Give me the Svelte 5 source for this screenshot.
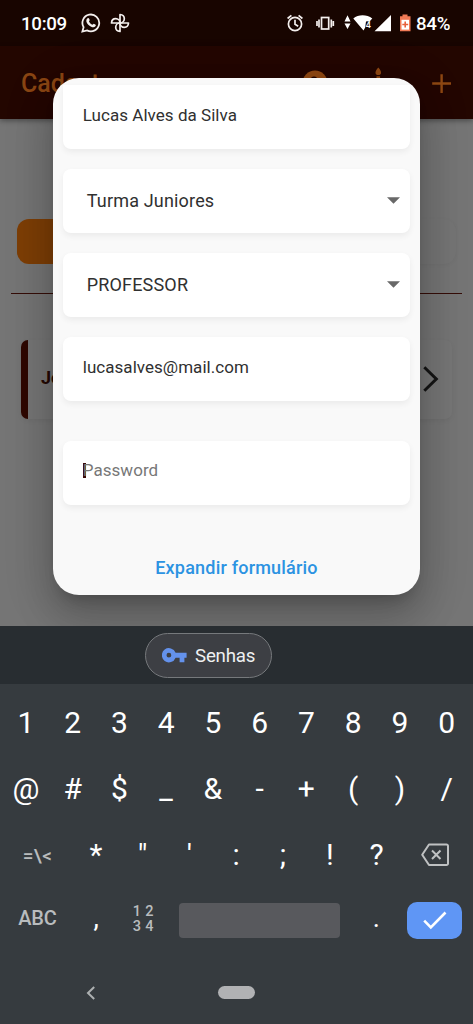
<script>
  const fields = [
    { text: 'Lucas Alves da Silva', kind: 'name' },
    { text: 'Turma Juniores', kind: 'select' },
    { text: 'PROFESSOR', kind: 'select' },
    { text: 'lucasalves@mail.com', kind: 'mail' },
    { text: 'Password', kind: 'password' }
  ];
  const digits = [...'1234567890'];
  const symbols = [...'@#$_&-+()/'];
  const marks = [...'*"\':;!?'];
</script>

<div class="phone">
  <main class="screen">
    <div class="status">
      <span class="time">10:09</span>
      <svg class="wa" width="20" height="20" viewBox="0 0 20 20" fill="none" stroke="#f4efed">
        <path stroke-width="1.8" d="M1.4 18.6l1.2-4.4A8.4 8.4 0 1 1 6 17.4z" />
        <path fill="#f4efed" stroke="none" d="M6.600 5.200c.6-.4 1.200-.3 1.400.3l.7 1.600c.1.5-.6 1-.7 1.300.7 1.500 1.900 2.700 3.500 3.300.4-.1.9-1 1.300-.9l1.800.9c.4.3.2 1-.2 1.600-1 1.200-2.600 1.200-4.300.4-2.200-1-3.800-2.700-4.600-4.700-.4-1.500-.1-3.100 1.100-3.800z" />
      </svg>
      <svg class="fan" width="20" height="20" viewBox="0 0 20 20" fill="none" stroke="#f4efed" stroke-width="1.7" stroke-linejoin="round">
        <path d="M10 10V1.500c3 .2 4.300 2 4.300 4.200 0 2.400-1.900 4.300-4.300 4.300z" />
        <path d="M10 10h8.500c-.2 3-2 4.300-4.200 4.300-2.400 0-4.300-1.900-4.300-4.300z" />
        <path d="M10 10v8.500c-3-.2-4.300-2-4.300-4.200 0-2.400 1.900-4.300 4.300-4.300z" />
        <path d="M10 10H1.500c.2-3 2-4.300 4.200-4.300 2.400 0 4.300 1.900 4.300 4.300z" />
      </svg>
      <span class="spacer"></span>
      <svg width="164" height="24" viewBox="286 11 164 24" class="sys">
        <g fill="none" stroke="#f4efed" stroke-width="1.700">
          <circle cx="295" cy="24" r="6.600" />
          <path d="M295 19.800v4.500l3.200 2M287.600 18.500l3.800-3.200M302.400 18.500l-3.800-3.200" />
          <rect x="321.500" y="17.500" width="7.200" height="11.500" />
          <path d="M319 19.500v8M317 21v5M331.300 19.500v8M333.300 21v5" />
        </g>
        <path fill="#fff" d="M344.500 21.500l3-6.200 3 6.200zM344.500 23.500h6l-3 5.500zM353.300 18.500c5-4.200 13.500-4.200 19 0l-2.300 2.500-4 .6-.8 6-1.700 3zM374.500 31.200H391V15z" />
        <text x="365.800" y="28.300" font-size="9" font-weight="500" fill="#fff">4</text>
        <path fill="#f17a55" d="M402.500 14.500h5v1.700h3v15h-10.500v-15h2.500z" />
        <path fill="#fff" d="M401.500 19.800h7.500v9.800h-7.500z" />
        <path stroke="#e8603a" stroke-width="1.600" d="M405.200 21.500v6M402.300 24.500h5.900" />
        <text x="416" y="30.200" font-size="18.700" font-weight="500" fill="#fff" textLength="34.500">84%</text>
      </svg>
    </div>
    <header>
      <h1>Cadastro</h1>
      <svg width="160" height="40" viewBox="300 62 160 40">
        <circle cx="315" cy="82" r="12.500" fill="#914914" />
        <circle cx="314" cy="79" r="3.500" fill="#230600" />
        <path fill="#914914" d="M378.300 66.500c4 4.500 3.400 7.400 0 7.600-3.400-.2-4-3.100 0-7.600zM376.500 75.300h3.600V92h-3.600z" />
        <path stroke="#8f4813" stroke-width="2.400" d="M432.200 82.500h18.800M441.600 73.200v18.800" />
      </svg>
    </header>
    <div class="tabs"><span class="active"></span><span class="idle"></span></div>
    <hr />
    <div class="person">
      <b>João</b>
      <svg width="18" height="28" viewBox="0 0 18 28" fill="none" stroke="#151515" stroke-width="3"><path d="M1.300 2.300L13.300 14l-12 11.700" /></svg>
    </div>

    <div class="overlay">
      <section class="dialog">
        <div class="form">
          {#each fields as f}
            <div class="field {f.kind}">
              <span>{f.text}</span>
              {#if f.kind === 'select'}
                <svg width="13" height="7" viewBox="0 0 13 7"><path fill="#686868" d="M0 .3h13L6.500 6.800z" /></svg>
              {/if}
            </div>
          {/each}
        </div>
        <button class="expand">Expandir formulário</button>
      </section>
    </div>
  </main>

  <section class="keyboard">
    <div class="suggest">
      <div class="chip">
        <svg width="25" height="15" viewBox="0 0 25 15"><path fill="#6492ec" fill-rule="evenodd" d="M13.600 4.800H24.600v4.900h-2.200v4.600h-4.800V9.700h-4A7.100 7.100 0 1 1 13.600 4.800zM6.900 4.800a2.400 2.400 0 1 0 0 4.800 2.400 2.400 0 0 0 0-4.800z" /></svg>
        <span>Senhas</span>
      </div>
    </div>
    <div class="keys">
      <div class="row">{#each digits as k}<span class="key">{k}</span>{/each}</div>
      <div class="row">{#each symbols as k}<span class="key">{k}</span>{/each}</div>
      <div class="row">
        <span class="key wide alt">=\&lt;</span>
        {#each marks as k}<span class="key">{k}</span>{/each}
        <span class="key wide">
          <svg width="30" height="24" viewBox="0 0 30 24" fill="none" stroke="#bfc1c2" stroke-width="2"><path stroke-linejoin="round" d="M9 1.500h17.500a1.500 1.500 0 0 1 1.500 1.500v17.500a1.500 1.500 0 0 1-1.500 1.500H9l-6.800-10.200z" /><path d="M12 7.500l8.500 8.500M20.500 7.500L12 16" /></svg>
        </span>
      </div>
      <div class="row">
        <span class="key wide abc">ABC</span>
        <span class="key low">,</span>
        <span class="key numpad"><i>1 2</i><i>3 4</i></span>
        <span class="space"></span>
        <span class="key low">.</span>
        <span class="enter"><svg width="24" height="19" viewBox="0 0 24 19" fill="none" stroke="#fff" stroke-width="2.600"><path d="M1.200 9.700l6.600 6.600L22.500 1.500" /></svg></span>
      </div>
    </div>
    <nav>
      <svg width="10" height="14" viewBox="0 0 10 14" fill="none" stroke="#adb0b1" stroke-width="2"><path d="M8.200 1L2 7l6.200 6" /></svg>
      <span class="home"></span>
    </nav>
  </section>
</div>

<style>
  :global(body) { margin: 0; background: #363b3f; }
  .phone { width: 473px; height: 1024px; overflow: hidden; font-family: Roboto, sans-serif; display: flex; flex-direction: column; }
  .screen { position: relative; height: 626px; flex: none; background: #757575; overflow: hidden; }
  .status { height: 46px; box-sizing: border-box; background: #180500; display: flex; align-items: center; padding: 0 23px 0 21px; color: #fff; }
  .time { font-size: 18.700px; font-weight: 500; letter-spacing: -.3px; line-height: 46px; width: 60px; padding-top: 1px; box-sizing: border-box; height: 46px; }
  .fan { margin-left: 9px; }
  .spacer { flex: 1; }
  header { height: 73px; background: #230600; display: flex; align-items: center; justify-content: space-between; padding: 0 13px 0 21px; box-shadow: 0 2px 5px rgba(0, 0, 0, .35); }
  h1 { margin: 0; font-size: 25px; font-weight: 500; color: #8a4513; line-height: 40px; padding-top: 3px; }
  .tabs { display: flex; justify-content: space-between; margin: 100px 17px 0; height: 45px; }
  .tabs span { width: 210px; border-radius: 12px; }
  .active { background: #7d3e06; }
  .idle { background: #757575; box-shadow: 0 1px 4px rgba(0, 0, 0, .04); }
  hr { border: 0; height: 1.500px; margin: 28.500px 11px 0 11px; background: #350d08; }
  .person { margin: 46px 21px 0; height: 79px; box-sizing: border-box; border-left: 7px solid #2e0800; border-radius: 7px; background: #767676; box-shadow: 0 2px 5px rgba(0, 0, 0, .05); display: flex; align-items: center; justify-content: space-between; padding: 0 11px 4px 13px; }
  .person b { font-size: 18px; color: #250a05; }
  .person svg { margin-top: 3px; }
  .overlay { position: absolute; inset: 0; display: flex; justify-content: center; align-items: flex-start; padding-top: 77.500px; }
  .dialog { width: 367.500px; height: 517px; box-sizing: border-box; padding: 7px 10px 0; border-radius: 26px; background: #f9f9f9; box-shadow: 0 11px 15px -7px rgba(0, 0, 0, .2), 0 24px 38px 3px rgba(0, 0, 0, .14), 0 9px 46px 8px rgba(0, 0, 0, .12); display: flex; flex-direction: column; }
  .form { display: flex; flex-direction: column; gap: 20px; }
  .field { height: 64px; box-sizing: border-box; background: #fff; border-radius: 8px; box-shadow: 0 3px 6px rgba(0, 0, 0, .06); display: flex; align-items: center; justify-content: space-between; padding: 0 10px 0 20px; color: #303030; font-size: 17px; letter-spacing: .04px; }
  .name { border-radius: 0 0 8px 8px; padding-bottom: 4px; }
  .select { padding-left: 24px; font-size: 18px; letter-spacing: .17px; }
  .mail { padding-bottom: 4px; }
  .password { margin-top: 20px; color: #777; padding-bottom: 5px; }
  .password span { background: linear-gradient(#3a0a08, #3a0a08) 0 0 / 3px 100% no-repeat; line-height: 15px; }
  .expand { border: 0; background: none; padding: 0; margin-top: 51px; color: #2c93e2; font: 500 18px/24px Roboto, sans-serif; letter-spacing: .2px; }
  .keyboard { flex: 1; background: #363b3f; }
  .suggest { height: 58px; background: #282d31; display: flex; align-items: center; justify-content: center; box-sizing: border-box; padding: 0 56px 0 0; }
  .chip { width: 127px; height: 45px; box-sizing: border-box; border: 1px solid #76797c; border-radius: 23px; background: #3d3f44; display: flex; align-items: center; gap: 8px; padding-left: 16px; color: #eef0f1; font-size: 18.700px; letter-spacing: -.2px; }
  .chip span { padding-top: 2px; }
  .keys { padding: 6px 3px 0 2.500px; }
  .row { height: 66px; display: flex; align-items: center; }
  .key { flex: 1 1 0; height: 66px; line-height: 65px; text-align: center; color: #fff; font-size: 30px; }
  .wide { flex: 0 0 70px; display: flex; align-items: center; justify-content: center; }
  .alt { color: #b9bbbc; font-size: 19px; font-weight: 500; letter-spacing: .4px; }
  .abc { color: #b9bcbe; font-size: 20px; font-weight: 500; line-height: 60px; padding-bottom: 6px; box-sizing: border-box; letter-spacing: -.2px; }
  .low { line-height: 60px; font-size: 27px; }
  .row .numpad { flex: 0 0 47px; display: flex; flex-direction: column; justify-content: center; color: #b9bcbe; font-size: 14.500px; font-weight: 500; line-height: 15px; padding-bottom: 5px; box-sizing: border-box; letter-spacing: .3px; }
  .numpad i { font-style: normal; }
  .space { width: 161px; height: 35px; background: #58595d; border-radius: 4px; margin: 0 13px 2px 12px; }
  .enter { width: 55px; height: 37px; border-radius: 10px; background: #5f96f5; display: flex; align-items: center; justify-content: center; margin: 0 8px 2px 7px; }
  nav { height: 77px; display: flex; align-items: center; padding: 0 0 0 86px; }
  .home { width: 37px; height: 13px; border-radius: 7px; background: #b1b2b4; margin-left: 122px; }
</style>
